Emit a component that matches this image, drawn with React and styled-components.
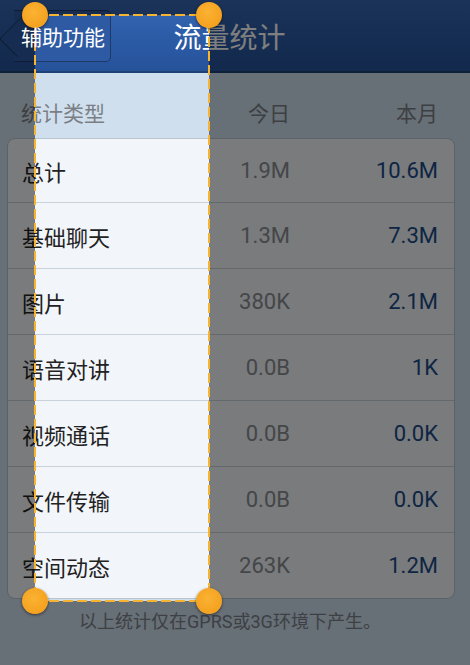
import React from "react";
import styled, { createGlobalStyle } from "styled-components";

const GlobalStyle = createGlobalStyle`
  html, body {
    margin: 0;
    padding: 0;
    background: #cfdfee;
  }
  body {
    font-family: "Roboto", "Noto Sans CJK SC", sans-serif;
  }
`;

const Screen = styled.div`
  position: relative;
  width: 470px;
  height: 665px;
  overflow: hidden;
  background: #cfdfee;
`;

const TopBar = styled.header`
  height: 73px;
  display: flex;
  align-items: center;
  background: linear-gradient(#3767b3, #2b5aa5 60%, #26529a);
  border-bottom: 2px solid #1f4275;
  box-sizing: border-box;
`;

const BackButton = styled.div`
  position: relative;
  margin-left: 14px;
  height: 50px;
  display: flex;
  align-items: center;
  padding: 0 5px 0 7px;
  color: #ffffff;
  font-size: 21px;
  background: #2d5aa2;
  border: 1px solid #1d3a66;
  border-left: none;
  border-radius: 0 5px 5px 0;

  &::before {
    content: "";
    position: absolute;
    left: -11px;
    top: 7px;
    width: 34px;
    height: 34px;
    transform: rotate(45deg) scale(0.72, 1);
    background: #2d5aa2;
    border-left: 1px solid #1d3a66;
    border-bottom: 1px solid #1d3a66;
    z-index: 0;
  }

  span {
    position: relative;
    z-index: 1;
  }
`;

const Title = styled.h1`
  flex: 1;
  margin: 0;
  padding-right: 122px;
  text-align: center;
  color: #ffffff;
  font-size: 28px;
  font-weight: 400;
`;

const Columns = styled.div`
  display: grid;
  grid-template-columns: 1fr 110px 148px;
  align-items: center;
`;

const HeadRow = styled(Columns)`
  height: 65px;
  padding: 12px 32px 0 21px;
  box-sizing: border-box;
  color: #7b7f85;
  font-size: 21px;
`;

const HeadCell = styled.div`
  text-align: ${(p) => (p.end ? "right" : "left")};
`;

const Card = styled.section`
  margin: 0 15px 0 7px;
  background: #f2f6fb;
  border: 1px solid #b9c4cf;
  border-radius: 8px;
  overflow: hidden;
`;

const Row = styled(Columns)`
  height: ${(p) => (p.first ? "63px" : "66px")};
  padding: 0 16px 0 14px;
  box-sizing: border-box;
  border-top: ${(p) => (p.first ? "none" : "1px solid #c9d2db")};
`;

const Label = styled.div`
  font-size: 22px;
  color: #222222;
`;

const Num = styled.div`
  text-align: right;
  font-size: 22px;
  color: ${(p) => (p.month ? "#1c4a86" : "#8a8d91")};
`;

const Note = styled.p`
  margin: 8px 0 0;
  text-align: center;
  color: #7b8088;
  font-size: 18px;
  padding-right: 10px;
`;

const Crop = styled.div`
  position: absolute;
  left: 35px;
  top: 15px;
  width: 174px;
  height: 586px;
  box-shadow: 0 0 0 1200px rgba(0, 0, 0, 0.5);
`;

const CropLine = styled.svg`
  position: absolute;
  left: -1px;
  top: -1px;
  overflow: visible;
`;

const Handle = styled.div`
  position: absolute;
  width: 26px;
  height: 26px;
  border-radius: 50%;
  background: radial-gradient(circle at 45% 40%, #fbb233, #f19a16);
  box-shadow: 0 1px 3px rgba(0, 0, 0, 0.55);
  left: ${(p) => (p.right ? "161px" : "-13px")};
  top: ${(p) => (p.bottom ? "573px" : "-13px")};
`;

const rows = [
  ["总计", "1.9M", "10.6M"],
  ["基础聊天", "1.3M", "7.3M"],
  ["图片", "380K", "2.1M"],
  ["语音对讲", "0.0B", "1K"],
  ["视频通话", "0.0B", "0.0K"],
  ["文件传输", "0.0B", "0.0K"],
  ["空间动态", "263K", "1.2M"],
];

export default function App() {
  return (
    <Screen>
      <GlobalStyle />
      <TopBar>
        <BackButton>
          <span>辅助功能</span>
        </BackButton>
        <Title>流量统计</Title>
      </TopBar>
      <HeadRow>
        <HeadCell>统计类型</HeadCell>
        <HeadCell end>今日</HeadCell>
        <HeadCell end>本月</HeadCell>
      </HeadRow>
      <Card>
        {rows.map(([name, today, month], i) => (
          <Row key={name} first={i === 0}>
            <Label>{name}</Label>
            <Num>{today}</Num>
            <Num month>{month}</Num>
          </Row>
        ))}
      </Card>
      <Note>以上统计仅在GPRS或3G环境下产生。</Note>
      <Crop>
        <CropLine width="176" height="588">
          <rect
            x="1"
            y="1"
            width="174"
            height="586"
            fill="none"
            stroke="#f6b431"
            strokeWidth="2"
            strokeDasharray="10 4"
          />
        </CropLine>
        <Handle />
        <Handle right />
        <Handle bottom />
        <Handle right bottom />
      </Crop>
    </Screen>
  );
}
